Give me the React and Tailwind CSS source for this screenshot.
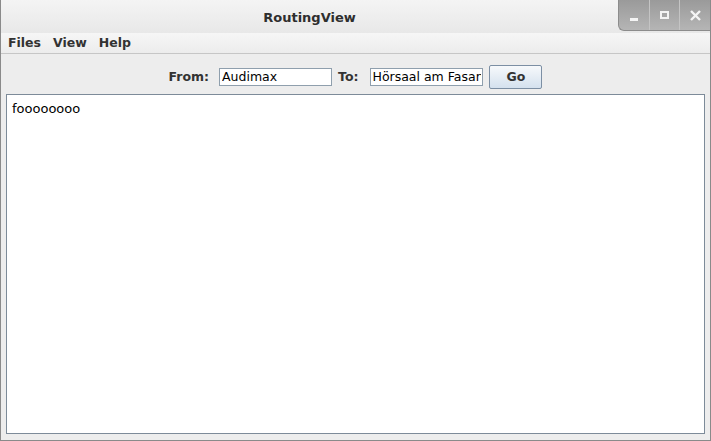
function TitleBar() {
  return (
    <div className="relative h-[33px] flex items-center justify-center pr-[92px] bg-gradient-to-b from-[#f4f4f4] to-[#e8e8e8]">
      <span className="text-[13px] font-bold text-[#2e2e2e] mt-[2px]">RoutingView</span>
      <div className="absolute right-0 top-0 h-[31px] w-[92px] flex rounded-bl-[6px] overflow-hidden bg-gradient-to-b from-[#9a9a9a] to-[#b5b5b5] border-l border-b border-[#8c8c8c]">
        <div className="flex-1 flex items-center justify-center border-r border-[#c4c4c4]">
          <div className="w-[8px] h-[3px] bg-[#f4f4f4] mt-[8px]" />
        </div>
        <div className="flex-1 flex items-center justify-center border-r border-[#c4c4c4]">
          <div className="w-[9px] h-[8px] border-2 border-[#f4f4f4]" />
        </div>
        <div className="flex-1 flex items-center justify-center">
          <svg width="11" height="11" viewBox="0 0 11 11">
            <path d="M1 1 L10 10 M10 1 L1 10" stroke="#f4f4f4" strokeWidth="2.4" />
          </svg>
        </div>
      </div>
    </div>
  );
}

function MenuBar() {
  return (
    <div className="h-[21px] flex items-center gap-[12px] px-[7px] pt-[1px] bg-gradient-to-b from-[#f6f6f6] to-[#ececec] border-b border-[#c6c6c6]">
      <span>Files</span>
      <span>View</span>
      <span>Help</span>
    </div>
  );
}

export default function App() {
  return (
    <div
      className="w-[711px] h-[441px] flex flex-col bg-[#ededed] border-x border-b border-[#8a8a8a] text-[12.5px] text-[#333]"
      style={{ fontFamily: '"DejaVu Sans", sans-serif' }}
    >
      <TitleBar />
      <div className="font-bold">
        <MenuBar />
      </div>
      <div className="h-[40px] flex items-center justify-center pt-[6px]">
        <span className="font-bold mr-[10px]">From:</span>
        <input
          readOnly
          value="Audimax"
          className="w-[113px] h-[18px] px-[2px] border border-[#8f9fad] bg-white text-black text-[12.5px] outline-none mr-[6px]"
        />
        <span className="font-bold mr-[12px]">To:</span>
        <input
          readOnly
          value="Hörsaal am Fasanengarten"
          className="w-[113px] h-[18px] px-[1px] border border-[#8f9fad] bg-white text-black text-[12.5px] outline-none mr-[6px]"
        />
        <button className="w-[53px] h-[24px] rounded-[2px] border border-[#7c8fa4] bg-gradient-to-b from-[#f7f9fb] to-[#d4e1ee] font-bold text-[12.5px] text-[#333]">
          Go
        </button>
      </div>
      <div className="flex-1 mx-[5px] mb-[6px] border border-[#7d8b99] bg-white px-[5px] pt-[4px] text-[13px] text-black">
        foooooooo
      </div>
    </div>
  );
}
